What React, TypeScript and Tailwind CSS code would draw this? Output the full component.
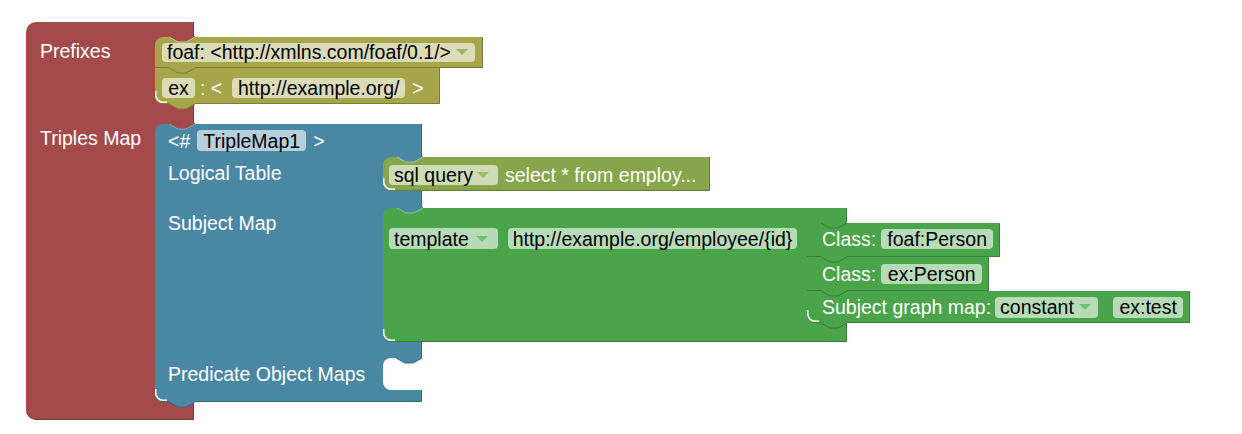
import React from "react";

type NotchProps = { fill: string; stroke: string; bottom?: boolean; pos?: string };

function Notch({ fill, stroke, bottom, pos }: NotchProps) {
  const vertical = bottom ? "top-full" : "top-[-1px]";
  const horizontal = pos ?? "left-[14px]";
  return (
    <svg
      className={`absolute ${vertical} ${horizontal} pointer-events-none overflow-visible`}
      width="26"
      height="7"
      viewBox="0 0 26 7"
    >
      <polygon points="0,0 0,1 9,6 17,6 26,1 26,0" fill={fill} />
      <polyline points="0,1 9,6 17,6 26,1" fill="none" stroke={stroke} strokeWidth="1" />
    </svg>
  );
}

function Arc() {
  return (
    <svg className="absolute left-0 bottom-0 pointer-events-none" width="12" height="12" viewBox="0 0 12 12">
      <path d="M0.75,0 V4 A7.25,7.25 0 0 0 8,11.25 H12" fill="none" stroke="#ffffff" strokeWidth="1.5" />
    </svg>
  );
}

function Arrow({ color }: { color: string }) {
  return (
    <svg className="shrink-0" width="12" height="6" viewBox="0 0 12 6">
      <polygon points="0,0 12,0 6,6" fill={color} />
    </svg>
  );
}

function OliveStack() {
  return (
    <div className="shrink-0 flex flex-col">
      <div className="relative w-[328px] h-[31px] bg-[#a5a54a] rounded-tl-[8px] border-r border-b border-[#7c7c38] flex items-center pl-[7px]">
        <Notch fill="#a54a4a" stroke="#c9c98a" />
        <div className="w-[313px] h-[19px] shrink-0 rounded-[4px] bg-[#dbdbb7] flex items-center pl-[5px] pr-[7px] text-black">
          <span className="whitespace-nowrap">foaf: &lt;http://xmlns.com/foaf/0.1/&gt;</span>
          <span className="ml-auto flex">
            <Arrow color="#aaaa70" />
          </span>
        </div>
      </div>
      <div className="relative w-[285px] h-[36px] bg-[#a5a54a] rounded-bl-[8px] border-r border-b border-[#7c7c38] flex items-center pl-[7px] pt-[4px]">
        <Notch fill="#a5a54a" stroke="#7c7c38" />
        <div className="w-[33px] h-[20px] shrink-0 rounded-[4px] bg-[#dbdbb7] flex items-center justify-center text-black">ex</div>
        <span className="ml-[5px] text-white whitespace-nowrap">: &lt;</span>
        <div className="ml-[10px] w-[173px] h-[20px] shrink-0 rounded-[4px] bg-[#dbdbb7] flex items-center justify-center text-black whitespace-nowrap">
          http://example.org/
        </div>
        <span className="ml-[7px] text-white">&gt;</span>
        <Arc />
        <Notch fill="#a5a54a" stroke="#7c7c38" bottom />
      </div>
    </div>
  );
}

function SqlBlock() {
  return (
    <div className="relative shrink-0 w-[327px] h-[34px] bg-[#87a54a] rounded-tl-[8px] rounded-bl-[8px] border-r border-b border-[#657c38] flex items-center pl-[6px] pt-[2px]">
      <Notch fill="#4a87a5" stroke="#a9c48a" />
      <div className="w-[109px] h-[20px] shrink-0 rounded-[4px] bg-[#cfdbb7] flex items-center pl-[5px] pr-[9px] text-black">
        <span className="whitespace-nowrap">sql query</span>
        <span className="ml-auto flex">
          <Arrow color="#9cbc6c" />
        </span>
      </div>
      <span className="ml-[7px] text-white whitespace-nowrap">select * from employ...</span>
      <Arc />
    </div>
  );
}

function ClassStack() {
  return (
    <div className="shrink-0 flex flex-col">
      <div className="relative w-[193px] h-[34px] bg-[#4aa54a] rounded-tl-[8px] border-r border-b border-[#387c38] flex items-center pl-[15px] pb-[2px]">
        <Notch fill="#4aa54a" stroke="#387c38" />
        <span className="text-white whitespace-nowrap">Class:</span>
        <div className="ml-[5px] w-[112px] h-[20px] shrink-0 rounded-[4px] bg-[#b7dbb7] flex items-center justify-center text-black whitespace-nowrap">
          foaf:Person
        </div>
      </div>
      <div className="relative w-[182px] h-[34px] bg-[#4aa54a] border-r border-b border-[#387c38] flex items-center pl-[15px]">
        <Notch fill="#4aa54a" stroke="#387c38" />
        <span className="text-white whitespace-nowrap">Class:</span>
        <div className="ml-[5px] w-[101px] h-[20px] shrink-0 rounded-[4px] bg-[#b7dbb7] flex items-center justify-center text-black whitespace-nowrap">
          ex:Person
        </div>
      </div>
      <div className="relative w-[383px] h-[32px] bg-[#4aa54a] rounded-bl-[8px] border-r border-b border-[#387c38] flex items-center pl-[15px] pt-[1px]">
        <Notch fill="#4aa54a" stroke="#387c38" />
        <span className="text-white whitespace-nowrap">Subject graph map:</span>
        <div className="ml-[4px] w-[103px] h-[21px] shrink-0 rounded-[4px] bg-[#b7dbb7] flex items-center pl-[5px] pr-[7px] text-black">
          <span className="whitespace-nowrap">constant</span>
          <span className="ml-auto flex">
            <Arrow color="#6fbf6f" />
          </span>
        </div>
        <div className="ml-[15px] w-[70px] h-[21px] shrink-0 rounded-[4px] bg-[#b7dbb7] flex items-center justify-center text-black whitespace-nowrap">
          ex:test
        </div>
        <Arc />
        <Notch fill="#4aa54a" stroke="#387c38" bottom />
      </div>
    </div>
  );
}

function GreenBlock() {
  return (
    <div className="relative shrink-0 w-[464px] h-[134px] bg-[#4aa54a] rounded-tl-[8px] rounded-bl-[8px] border-r border-b border-[#387c38] flex flex-col">
      <Notch fill="#4a87a5" stroke="#8ac48a" />
      <div className="h-[15px]" />
      <div className="flex">
        <div className="w-[424px] shrink-0 flex items-start pl-[6px] pt-[5px]">
          <div className="w-[109px] h-[21px] shrink-0 rounded-[4px] bg-[#b7dbb7] flex items-center pl-[5px] pr-[10px] text-black">
            <span className="whitespace-nowrap">template</span>
            <span className="ml-auto flex">
              <Arrow color="#6fbf6f" />
            </span>
          </div>
          <div className="ml-[10px] w-[289px] h-[21px] shrink-0 rounded-[4px] bg-[#b7dbb7] flex items-center justify-center text-black whitespace-nowrap">
            http://example.org/employee/{"{id}"}
          </div>
        </div>
        <ClassStack />
      </div>
      <Arc />
    </div>
  );
}

function BlueBlock() {
  return (
    <div className="relative shrink-0 w-[267px] h-[278px] bg-[#4a87a5] rounded-tl-[8px] rounded-bl-[8px] border-r border-b border-[#38657c] flex flex-col">
      <Notch fill="#a54a4a" stroke="#7aaac4" />
      <div className="h-[33px] flex items-center pl-[13px]">
        <span className="text-white whitespace-nowrap">&lt;#</span>
        <div className="ml-[7px] w-[109px] h-[21px] shrink-0 rounded-[4px] bg-[#b7cfdb] flex items-center justify-center text-black whitespace-nowrap">
          TripleMap1
        </div>
        <span className="ml-[7px] text-white">&gt;</span>
      </div>
      <div className="flex h-[34px]">
        <div className="w-[228px] shrink-0 pl-[13px] pt-[5px] text-white whitespace-nowrap">Logical Table</div>
        <SqlBlock />
      </div>
      <div className="h-[17px]" />
      <div className="flex h-[134px]">
        <div className="w-[228px] shrink-0 pl-[13px] pt-[4px] text-white whitespace-nowrap">Subject Map</div>
        <GreenBlock />
      </div>
      <div className="h-[16px]" />
      <div className="flex h-[32px]">
        <div className="w-[228px] shrink-0 pl-[13px] pt-[5px] text-white whitespace-nowrap">Predicate Object Maps</div>
        <div className="relative w-[40px] shrink-0 bg-white rounded-l-[8px]">
          <Notch fill="#4a87a5" stroke="#38657c" pos="left-[13px]" />
        </div>
      </div>
      <div className="h-[11px]" />
      <Arc />
      <Notch fill="#4a87a5" stroke="#38657c" bottom />
    </div>
  );
}

export default function App() {
  return (
    <div className="w-[1242px] h-[434px] bg-white pl-[26px] pt-[22px] overflow-hidden font-['Liberation_Sans',Arial,sans-serif] text-[19.5px] leading-[22px]">
      <div className="relative w-[168px] bg-[#a54a4a] rounded-tl-[10px] rounded-bl-[10px] border-r border-b border-[#7c3838] flex flex-col">
        <div className="h-[15px]" />
        <div className="flex h-[67px]">
          <div className="w-[129px] shrink-0 pl-[14px] pt-[3px] text-white whitespace-nowrap">Prefixes</div>
          <OliveStack />
        </div>
        <div className="h-[20px]" />
        <div className="flex h-[278px]">
          <div className="w-[129px] shrink-0 pl-[14px] pt-[3px] text-white whitespace-nowrap">Triples Map</div>
          <BlueBlock />
        </div>
        <div className="h-[17px]" />
      </div>
    </div>
  );
}
